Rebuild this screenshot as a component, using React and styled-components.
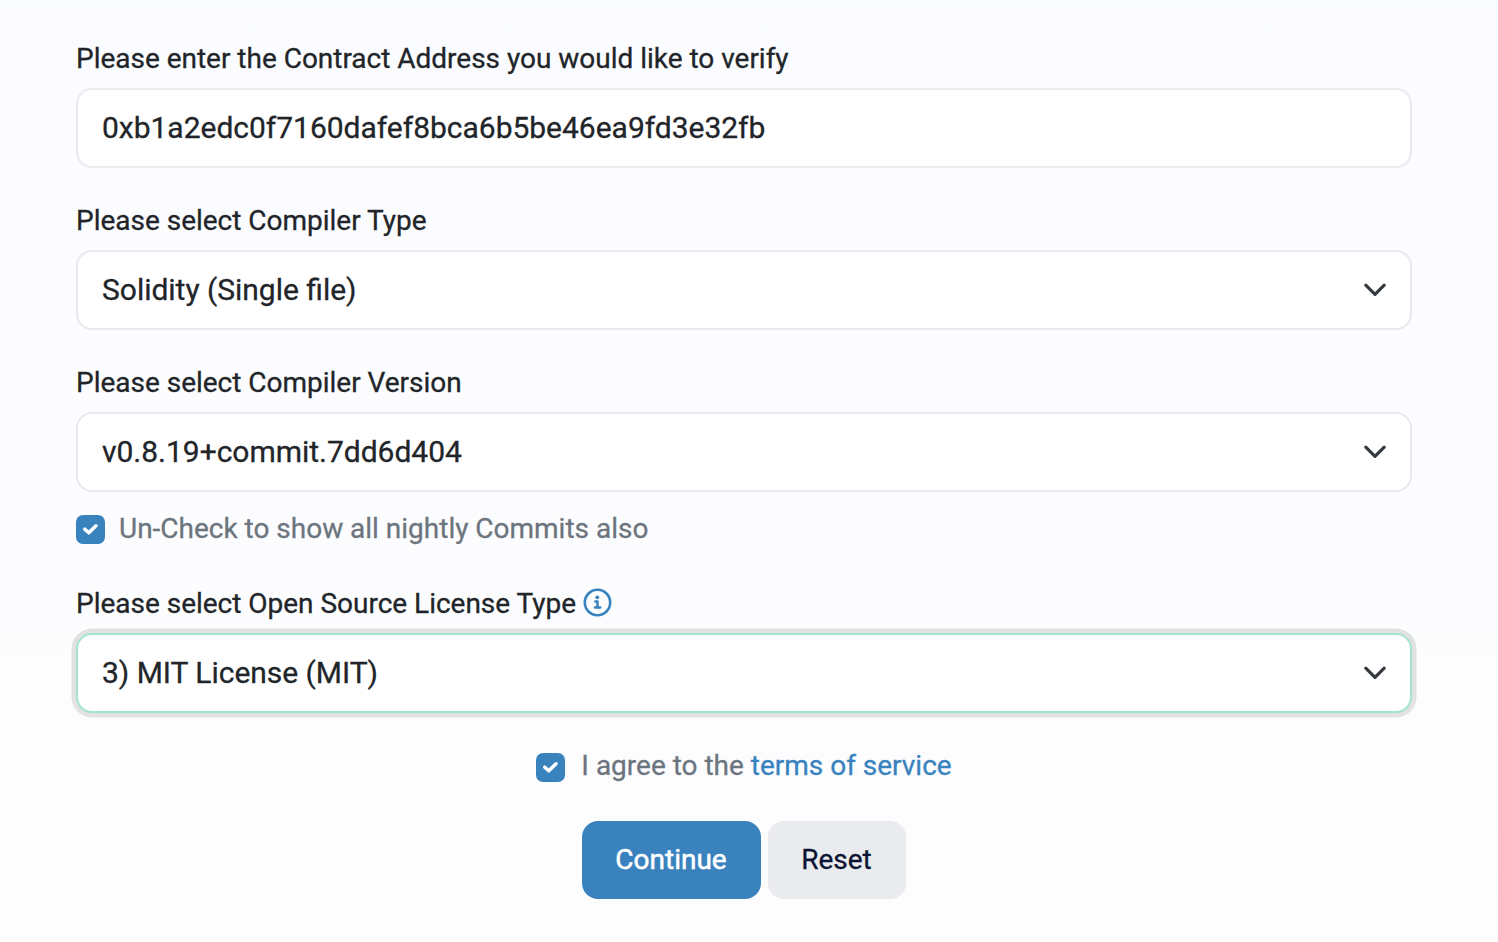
import React from "react";
import styled, { createGlobalStyle, css } from "styled-components";

const GlobalStyle = createGlobalStyle`
  * { box-sizing: border-box; }
  html { background: #fcfdfe; }
  body { margin: 0; font-family: Roboto, "Liberation Sans", sans-serif; color: #212529; }
`;

const Page = styled.main`
  min-height: 942px;
  padding: 37px 86px 0 76px;
  background: linear-gradient(#fbfcff, #fdfdfe);
  -webkit-text-stroke: 0.3px currentColor;
`;
const Form = styled.form`
  display: flex;
  flex-direction: column;
`;
const Field = styled.div`
  display: flex;
  flex-direction: column;
  margin-bottom: ${(p) => p.$gap ?? 31}px;
`;
const Label = styled.label`
  display: flex;
  align-items: center;
  gap: 7px;
  height: 43px;
  margin-bottom: 8px;
  font-size: 28px;
  line-height: 43px;
  letter-spacing: -0.015px;
  white-space: nowrap;
`;
const controlBox = css`
  width: 100%;
  height: 80px;
  padding: 0 24px;
  border: 2px solid ${(p) => (p.$focused ? "#a3e4d0" : "#e9eaef")};
  border-radius: 16px;
  background: #fff;
  box-shadow: ${(p) => (p.$focused ? "0 0 0 4.5px #e1e2e2" : "none")};
  color: #212529;
  font: 400 30px/46px Roboto, "Liberation Sans", sans-serif;
  letter-spacing: -0.02px;
  font-feature-settings: "liga" 1;
`;
const AddressInput = styled.input`
  ${controlBox}
  padding-bottom: 2px;
  outline: none;
`;
const SelectBox = styled.div`
  ${controlBox}
  padding-right: 23px;
  display: flex;
  align-items: center;
  justify-content: space-between;
`;
const CheckRow = styled.div`
  display: flex;
  align-items: center;
  justify-content: ${(p) => (p.$centered ? "center" : "flex-start")};
  gap: ${(p) => (p.$centered ? 16 : 14)}px;
  height: 43px;
  color: #6c757d;
  font-size: 28px;
  line-height: 43px;
  letter-spacing: -0.01px;
  white-space: nowrap;
`;
const CheckMark = styled.span`
  display: flex;
  width: 29px;
  height: 29px;
  margin-top: ${(p) => p.$drop}px;
  border-radius: 7px;
  background: #3882be;
`;
const TermsLink = styled.a`
  color: #3882be;
  text-decoration: none;
`;
const Actions = styled.div`
  display: flex;
  justify-content: center;
  gap: 7px;
`;
const Button = styled.button`
  width: ${(p) => (p.$primary ? 179 : 138)}px;
  height: 78px;
  padding: 0 1px 0 0;
  border: 0;
  border-radius: 16px;
  background: ${(p) => (p.$primary ? "#3a82be" : "#eaebef")};
  color: ${(p) => (p.$primary ? "#fff" : "#0c1433")};
  font: 400 28px/42px Roboto, "Liberation Sans", sans-serif;
  -webkit-text-stroke: ${(p) => (p.$primary ? 0.5 : 0.3)}px currentColor;
`;
const InfoSvg = styled.svg`
  margin-bottom: 2px;
`;

const Chevron = () => (
  <svg width="24" height="24" viewBox="0 0 24 24" fill="none" stroke="#343a40" strokeWidth="3.200" strokeLinecap="round" strokeLinejoin="round">
    <path d="M2.800 7.200 12 16.300l9.200-9.100" />
  </svg>
);
const Checkbox = ({ drop = 3 }) => (
  <CheckMark role="checkbox" aria-checked="true" $drop={drop}>
    <svg width="29" height="29" viewBox="0 0 29 29" fill="none" stroke="#fff" strokeWidth="3.500" strokeLinecap="round" strokeLinejoin="round">
      <path d="m8.800 14.200 4 3.600 7.200-7" />
    </svg>
  </CheckMark>
);
const InfoIcon = () => (
  <InfoSvg width="29" height="29" viewBox="0 0 29 29" fill="none" stroke="#3882be">
    <circle cx="14.500" cy="14.500" r="12.700" strokeWidth="2.600" />
    <circle cx="14.300" cy="9.300" r="1.900" fill="#3882be" stroke="none" />
    <path d="M12.300 13.500h2.200v6M12 19.600h5.200" strokeWidth="2.500" strokeLinecap="round" strokeLinejoin="round" />
  </InfoSvg>
);
const Select = ({ children, ...props }) => (
  <SelectBox role="combobox" {...props}><span>{children}</span><Chevron /></SelectBox>
);

export default function App() {
  return (
    <Page>
      <GlobalStyle />
      <Form>
        <Field>
          <Label>Please enter the Contract Address you would like to verify</Label>
          <AddressInput readOnly value="0xb1a2edc0f7160dafef8bca6b5be46ea9fd3e32fb" />
        </Field>
        <Field>
          <Label>Please select Compiler Type</Label>
          <Select>Solidity (Single file)</Select>
        </Field>
        <Field $gap={15}>
          <Label>Please select Compiler Version</Label>
          <Select>v0.8.19+commit.7dd6d404</Select>
        </Field>
        <Field $gap={32}>
          <CheckRow><Checkbox drop={1} />Un-Check to show all nightly Commits also</CheckRow>
        </Field>
        <Field $gap={31}>
          <Label>Please select Open Source License Type<InfoIcon /></Label>
          <Select $focused>3) MIT License (MIT)</Select>
        </Field>
        <Field $gap={34}>
          <CheckRow $centered><Checkbox /><span>I agree to the <TermsLink>terms of service</TermsLink></span></CheckRow>
        </Field>
        <Actions>
          <Button type="button" $primary>Continue</Button>
          <Button type="button">Reset</Button>
        </Actions>
      </Form>
    </Page>
  );
}
